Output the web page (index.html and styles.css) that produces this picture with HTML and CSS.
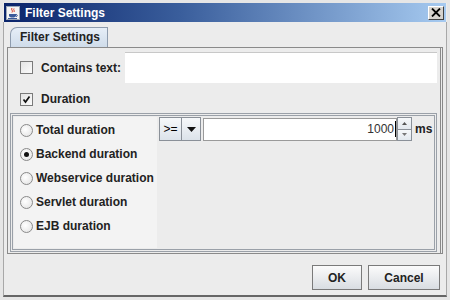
FILE: index.html
```html
<!DOCTYPE html>
<html lang="en">
<head>
  <meta charset="UTF-8">
  <title>Filter Settings</title>
  <link rel="stylesheet" href="styles.css">
</head>
<body>

  <div class="window">
    <div class="titlebar">
      <span class="app-icon">
        <svg width="14" height="14" viewBox="0 0 14 14">
          <rect x="0.5" y="0.5" width="13" height="13" fill="#f4f4f4" stroke="#9aa6b8"/>
          <path d="M6 2 C4.5 3.5 7.5 4.5 6 6.5 M8 2.5 C7 4 9 4.5 8 6" stroke="#d8402a" stroke-width="1" fill="none"/>
          <path d="M3 8 H10 V9.5 C10 11 8.5 11.5 6.5 11.5 C4.5 11.5 3 11 3 9.5 Z" fill="#3a5a9a"/>
          <path d="M10 8.5 C11.8 8.5 11.8 10.5 10 10.5" stroke="#3a5a9a" fill="none"/>
          <rect x="2" y="12" width="9" height="1" fill="#3a5a9a"/>
        </svg>
      </span>
      <span class="title">Filter Settings</span>
      <span class="close-btn">
        <svg width="10" height="9" viewBox="0 0 10 9">
          <path d="M1 0.5 L9 8.5 M9 0.5 L1 8.5" stroke="#000" stroke-width="1.8"/>
        </svg>
      </span>
    </div>

    <div class="client">
      <div class="tabs">
        <div class="tab">Filter Settings</div>
      </div>

      <div class="tab-panel">
        <div class="row text-row">
          <span class="checkbox"></span>
          <span class="label">Contains text:</span>
          <div class="text-field"></div>
        </div>

        <div class="row duration-row">
          <span class="checkbox">
            <svg width="9" height="9" viewBox="0 0 9 9">
              <path d="M1.5 4.5 L3.5 7 L7.5 1.5" stroke="#111" stroke-width="1.7" fill="none"/>
            </svg>
          </span>
          <span class="label">Duration</span>
        </div>

        <div class="group">
          <div class="radios">
            <div class="radio-row"><span class="radio"></span>Total duration</div>
            <div class="radio-row"><span class="radio selected"></span>Backend duration</div>
            <div class="radio-row"><span class="radio"></span>Webservice duration</div>
            <div class="radio-row"><span class="radio"></span>Servlet duration</div>
            <div class="radio-row"><span class="radio"></span>EJB duration</div>
          </div>

          <div class="criteria">
            <span class="op-btn">&gt;=</span>
            <span class="drop-btn">
              <svg width="9" height="5" viewBox="0 0 9 5"><path d="M0 0 H9 L4.5 5 Z" fill="#111"/></svg>
            </span>
            <div class="num-field">1000<span class="caret"></span></div>
            <div class="spinner">
              <span class="spin-up"><svg width="5" height="3" viewBox="0 0 5 3"><path d="M0 3 L2.5 0 L5 3 Z" fill="#555"/></svg></span>
              <span class="spin-down"><svg width="5" height="3" viewBox="0 0 5 3"><path d="M0 0 L2.5 3 L5 0 Z" fill="#777"/></svg></span>
            </div>
            <span class="unit">ms</span>
          </div>
        </div>
      </div>

      <div class="buttons">
        <button class="ok-btn">OK</button>
        <button class="cancel-btn">Cancel</button>
      </div>
    </div>
  </div>

</body>
</html>
```

FILE: styles.css
```css
body {
  margin: 0;
  font-family: 'Liberation Sans', Arial, sans-serif;
  font-size: 12px;
  font-weight: bold;
  color: #222;
  background-color: #ececec;
}

.window {
  width: 450px;
  height: 300px;
  box-sizing: border-box;
  border: 3px solid #e6e6e6;
  background-color: #ececec;
  display: flex;
  flex-direction: column;
}

.titlebar {
  height: 19px;
  margin: 0 1px;
  padding: 0 2px 0 2px;
  display: flex;
  align-items: center;
  background: linear-gradient(to right, #0a246a 0%, #3a5e9c 40%, #a6caf0 100%);
  color: white;
}

.app-icon {
  display: flex;
  width: 14px;
  height: 14px;
}

.title {
  margin-left: 5px;
}

.close-btn {
  margin-left: auto;
  width: 14px;
  height: 12px;
  display: flex;
  align-items: center;
  justify-content: center;
  background-color: #d6d3ce;
  border: 1px solid;
  border-color: #fff #404040 #404040 #fff;
}

.client {
  flex: 1;
  display: flex;
  flex-direction: column;
  padding: 5px 3px 0 3px;
  border-left: 1px solid #a8a8a8;
  border-right: 1px solid #a8a8a8;
  border-bottom: 2px solid #666;
}

.tabs {
  display: flex;
  height: 20px;
  padding-left: 3px;
}

.tab {
  width: 98px;
  box-sizing: border-box;
  padding-left: 9px;
  line-height: 19px;
  border: 1px solid #8e9cae;
  border-bottom: none;
  border-top-left-radius: 7px;
  background: linear-gradient(#e6eef7, #cfdcea);
}

.tab-panel {
  height: 207px;
  box-sizing: border-box;
  border: 1px solid #8a8a8a;
  border-right: 3px double #8a8a8a;
  padding: 4px 3px 0 2px;
  display: flex;
  flex-direction: column;
}

.row {
  display: flex;
  align-items: center;
  padding-left: 10px;
}

.text-row {
  height: 31px;
}

.duration-row {
  height: 22px;
  margin-top: 5px;
}

.checkbox {
  width: 11px;
  height: 11px;
  border: 1px solid #7a7a7a;
  background: linear-gradient(135deg, #e4e4e4, #fbfbfb);
  display: flex;
  align-items: center;
  justify-content: center;
}

.label {
  margin-left: 8px;
}

.text-field {
  flex: 1;
  height: 31px;
  margin-left: 4px;
  background-color: #fff;
  border-top: 1px solid #c8c8c8;
  box-sizing: border-box;
}

.group {
  margin-top: 3px;
  height: 139px;
  box-sizing: border-box;
  border: 3px double #9aa0a8;
  padding: 1px;
  display: flex;
  align-items: flex-start;
}

.radios {
  width: 143px;
  height: 131px;
  box-sizing: border-box;
  padding-top: 1px;
  background-color: #f3f3f3;
}

.radio-row {
  height: 24px;
  display: flex;
  align-items: center;
  padding-left: 6px;
}

.radio {
  width: 11px;
  height: 11px;
  border: 1px solid #8a8a8a;
  border-radius: 50%;
  background: radial-gradient(circle at 40% 40%, #fff, #e0e0e0);
  margin-right: 3px;
  display: flex;
  align-items: center;
  justify-content: center;
}

.radio.selected::after {
  content: "";
  width: 5px;
  height: 5px;
  border-radius: 50%;
  background-color: #111;
}

.criteria {
  display: flex;
  align-items: center;
  height: 24px;
  margin-left: 2px;
}

.op-btn,
.drop-btn {
  height: 24px;
  box-sizing: border-box;
  border: 1px solid #8a9098;
  background: linear-gradient(#f6f8fa, #dce3ea);
  display: flex;
  align-items: center;
  justify-content: center;
}

.op-btn {
  width: 23px;
  font-weight: normal;
  color: #000;
}

.drop-btn {
  width: 19px;
  border-left: none;
}

.num-field {
  width: 194px;
  height: 23px;
  box-sizing: border-box;
  margin-left: 2px;
  border: 1px solid #9a9a9a;
  background-color: #fff;
  display: flex;
  align-items: center;
  justify-content: flex-end;
  font-weight: normal;
  color: #333;
}

.caret {
  width: 1px;
  height: 16px;
  background-color: #000;
  margin-left: 1px;
}

.spinner {
  width: 15px;
  height: 24px;
  box-sizing: border-box;
  border: 1px solid #8a9098;
  display: flex;
  flex-direction: column;
}

.spin-up,
.spin-down {
  flex: 1;
  display: flex;
  align-items: center;
  justify-content: center;
  background: linear-gradient(#f6f8fa, #e2e8ee);
}

.spin-up {
  border-bottom: 1px solid #8a9098;
}

.unit {
  margin-left: 3px;
}

.buttons {
  display: flex;
  justify-content: flex-end;
  gap: 6px;
  padding: 11px 3px 0 0;
}

button {
  height: 25px;
  font-family: 'Liberation Sans', Arial, sans-serif;
  font-size: 12px;
  font-weight: bold;
  color: #222;
  border: 1px solid #7a7a7a;
  background: linear-gradient(#fbfbfb, #d9dde2);
  padding: 0;
}

.ok-btn {
  width: 50px;
}

.cancel-btn {
  width: 72px;
}
```
